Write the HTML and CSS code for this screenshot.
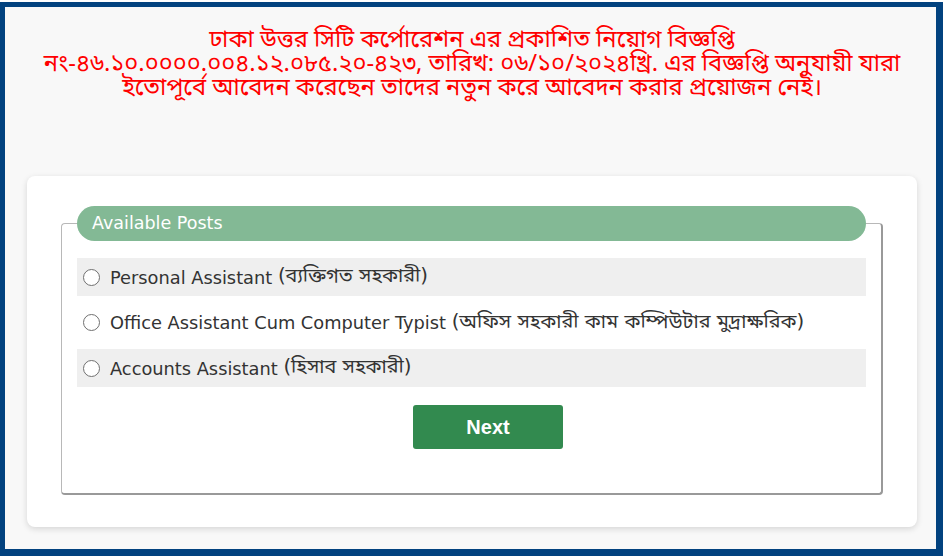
FILE: index.html
```html
<!DOCTYPE html>
<html lang="bn">
<head>
<meta charset="utf-8">
<title>নিয়োগ বিজ্ঞপ্তি</title>
<link rel="stylesheet" href="styles.css">
</head>
<body>
<div class="frame">
  <p class="notice">ঢাকা উত্তর সিটি কর্পোরেশন এর প্রকাশিত নিয়োগ বিজ্ঞপ্তি<br>নং-৪৬.১০.০০০০.০০৪.১২.০৮৫.২০-৪২৩, তারিখ: ০৬/১০/২০২৪খ্রি. এর বিজ্ঞপ্তি অনুযায়ী যারা<br>ইতোপূর্বে আবেদন করেছেন তাদের নতুন করে আবেদন করার প্রয়োজন নেই।</p>
  <div class="card">
    <fieldset class="posts">
      <legend class="posts-title">Available Posts</legend>
      <div class="options">
        <label class="option shaded"><span class="radio"></span>Personal Assistant&nbsp;<span class="bn">(ব্যক্তিগত সহকারী)</span></label>
        <label class="option"><span class="radio"></span>Office Assistant Cum Computer Typist&nbsp;<span class="bn">(অফিস সহকারী কাম কম্পিউটার মুদ্রাক্ষরিক)</span></label>
        <label class="option shaded"><span class="radio"></span>Accounts Assistant&nbsp;<span class="bn">(হিসাব সহকারী)</span></label>
      </div>
      <div class="actions">
        <button class="next" type="button">Next</button>
      </div>
    </fieldset>
  </div>
</div>
</body>
</html>
```
FILE: styles.css
```css
html, body {
  margin: 0;
  padding: 0;
  background: #ffffff;
}
.frame {
  box-sizing: border-box;
  width: 943px;
  height: 554px;
  margin-top: 2px;
  border-style: solid;
  border-color: #02427f;
  border-width: 5px 7px 7px 5px;
  background: #f8f8f8;
  padding: 0 19px 0 22px;
}
.notice {
  margin: 0 0 75px;
  padding-top: 22px;
  text-align: center;
  color: #ff0000;
  font-family: "Vrinda", "Noto Sans Bengali", "Noto Serif Bengali", "Lohit Bengali", "FreeSans", sans-serif;
  font-size: 23.7px;
  line-height: 24px;
}
.card {
  background: #ffffff;
  border-radius: 8px;
  box-shadow: 0 2px 6px rgba(0, 0, 0, 0.14);
  padding: 30px 34px 32px 34px;
}
.posts {
  margin: 0;
  padding: 0 15px 44px 15px;
  border: 1px solid #b8b8b8;
  border-right: 2px solid #999999;
  border-bottom: 2px solid #999999;
  border-radius: 4px;
  font-family: "DejaVu Sans", Verdana, sans-serif;
}
.posts-title {
  box-sizing: border-box;
  width: 100%;
  height: 35px;
  padding: 0 15px;
  border-radius: 17.5px;
  background: #83b995;
  color: #ffffff;
  font-size: 17.5px;
  line-height: 35px;
}
.options {
  display: flex;
  flex-direction: column;
  gap: 7.5px;
  margin-top: 17px;
}
.option {
  display: flex;
  align-items: center;
  height: 38px;
  padding-left: 6px;
  color: #333333;
  font-size: 17.8px;
  font-family: "DejaVu Sans", "Noto Sans Bengali", "Lohit Bengali", "FreeSans", sans-serif;
}
.bn {
  font-size: 19.8px;
}
.shaded {
  background: #efefef;
}
.radio {
  box-sizing: border-box;
  flex: none;
  width: 17px;
  height: 17px;
  margin-right: 10px;
  border: 1.4px solid #707070;
  border-radius: 50%;
  background: #ffffff;
}
.actions {
  display: flex;
  justify-content: center;
  padding-left: 33px;
  margin-top: 18px;
}
.next {
  width: 150px;
  height: 44px;
  border: none;
  border-radius: 3px;
  background: #328a4f;
  color: #ffffff;
  font-family: "Liberation Sans", Arial, sans-serif;
  font-weight: bold;
  font-size: 20px;
}
```
